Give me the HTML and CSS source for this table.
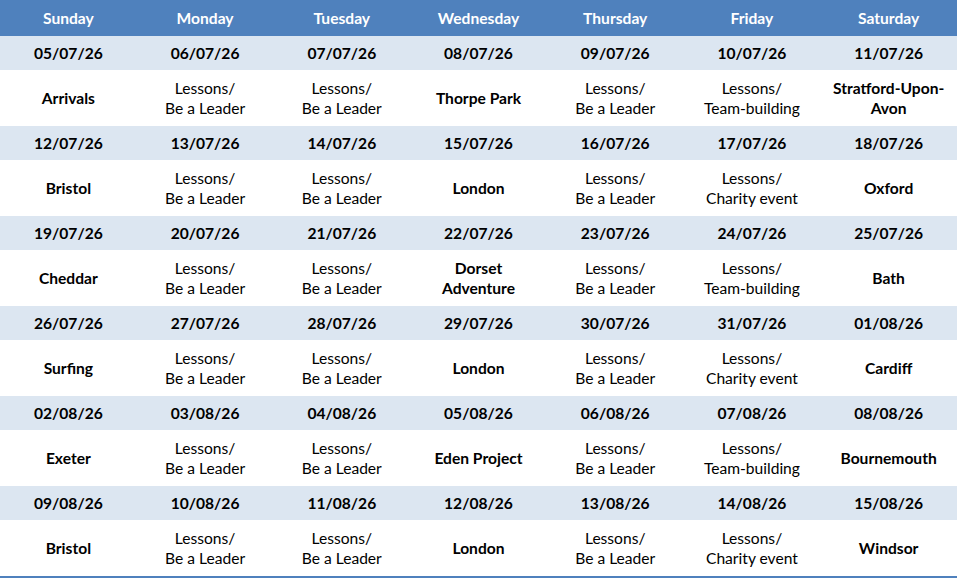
FILE: index.html
```html
<!DOCTYPE html>
<html>
<head>
<meta charset="utf-8">
<link rel="stylesheet" href="styles.css">
</head>
<body>
<div class="schedule">
  <div class="row head">
    <div class="cell">Sunday</div><div class="cell">Monday</div><div class="cell">Tuesday</div><div class="cell">Wednesday</div><div class="cell">Thursday</div><div class="cell">Friday</div><div class="cell">Saturday</div>
  </div>

  <div class="row dates">
    <div class="cell">05/07/26</div><div class="cell">06/07/26</div><div class="cell">07/07/26</div><div class="cell">08/07/26</div><div class="cell">09/07/26</div><div class="cell">10/07/26</div><div class="cell">11/07/26</div>
  </div>
  <div class="row acts">
    <div class="cell trip">Arrivals</div><div class="cell">Lessons/<br>Be a Leader</div><div class="cell">Lessons/<br>Be a Leader</div><div class="cell trip">Thorpe Park</div><div class="cell">Lessons/<br>Be a Leader</div><div class="cell">Lessons/<br>Team-building</div><div class="cell trip">Stratford-Upon-<br>Avon</div>
  </div>

  <div class="row dates">
    <div class="cell">12/07/26</div><div class="cell">13/07/26</div><div class="cell">14/07/26</div><div class="cell">15/07/26</div><div class="cell">16/07/26</div><div class="cell">17/07/26</div><div class="cell">18/07/26</div>
  </div>
  <div class="row acts">
    <div class="cell trip">Bristol</div><div class="cell">Lessons/<br>Be a Leader</div><div class="cell">Lessons/<br>Be a Leader</div><div class="cell trip">London</div><div class="cell">Lessons/<br>Be a Leader</div><div class="cell">Lessons/<br>Charity event</div><div class="cell trip">Oxford</div>
  </div>

  <div class="row dates">
    <div class="cell">19/07/26</div><div class="cell">20/07/26</div><div class="cell">21/07/26</div><div class="cell">22/07/26</div><div class="cell">23/07/26</div><div class="cell">24/07/26</div><div class="cell">25/07/26</div>
  </div>
  <div class="row acts">
    <div class="cell trip">Cheddar</div><div class="cell">Lessons/<br>Be a Leader</div><div class="cell">Lessons/<br>Be a Leader</div><div class="cell trip">Dorset<br>Adventure</div><div class="cell">Lessons/<br>Be a Leader</div><div class="cell">Lessons/<br>Team-building</div><div class="cell trip">Bath</div>
  </div>

  <div class="row dates">
    <div class="cell">26/07/26</div><div class="cell">27/07/26</div><div class="cell">28/07/26</div><div class="cell">29/07/26</div><div class="cell">30/07/26</div><div class="cell">31/07/26</div><div class="cell">01/08/26</div>
  </div>
  <div class="row acts">
    <div class="cell trip">Surfing</div><div class="cell">Lessons/<br>Be a Leader</div><div class="cell">Lessons/<br>Be a Leader</div><div class="cell trip">London</div><div class="cell">Lessons/<br>Be a Leader</div><div class="cell">Lessons/<br>Charity event</div><div class="cell trip">Cardiff</div>
  </div>

  <div class="row dates">
    <div class="cell">02/08/26</div><div class="cell">03/08/26</div><div class="cell">04/08/26</div><div class="cell">05/08/26</div><div class="cell">06/08/26</div><div class="cell">07/08/26</div><div class="cell">08/08/26</div>
  </div>
  <div class="row acts">
    <div class="cell trip">Exeter</div><div class="cell">Lessons/<br>Be a Leader</div><div class="cell">Lessons/<br>Be a Leader</div><div class="cell trip">Eden Project</div><div class="cell">Lessons/<br>Be a Leader</div><div class="cell">Lessons/<br>Team-building</div><div class="cell trip">Bournemouth</div>
  </div>

  <div class="row dates">
    <div class="cell">09/08/26</div><div class="cell">10/08/26</div><div class="cell">11/08/26</div><div class="cell">12/08/26</div><div class="cell">13/08/26</div><div class="cell">14/08/26</div><div class="cell">15/08/26</div>
  </div>
  <div class="row acts">
    <div class="cell trip">Bristol</div><div class="cell">Lessons/<br>Be a Leader</div><div class="cell">Lessons/<br>Be a Leader</div><div class="cell trip">London</div><div class="cell">Lessons/<br>Be a Leader</div><div class="cell">Lessons/<br>Charity event</div><div class="cell trip">Windsor</div>
  </div>
</div>
</body>
</html>
```

FILE: styles.css
```css
html, body {
  margin: 0;
  padding: 0;
  background: #ffffff;
}
body {
  font-family: Lato, "Open Sans", "Liberation Sans", sans-serif;
  font-size: 15.6px;
  color: #000;
  width: 957px;
}
.schedule {
  width: 957px;
  border-bottom: 2px solid #4f81bd;
}
.row {
  display: grid;
  grid-template-columns: repeat(7, 1fr);
}
.cell {
  display: flex;
  align-items: center;
  justify-content: center;
  text-align: center;
  line-height: 20px;
}
.head {
  height: 36px;
  background: #4f81bd;
  color: #ffffff;
  font-weight: bold;
}
.dates {
  height: 34px;
  background: #dce6f1;
  font-weight: bold;
}
.acts {
  height: 56px;
  background: #ffffff;
}
.trip {
  font-weight: bold;
}
```
